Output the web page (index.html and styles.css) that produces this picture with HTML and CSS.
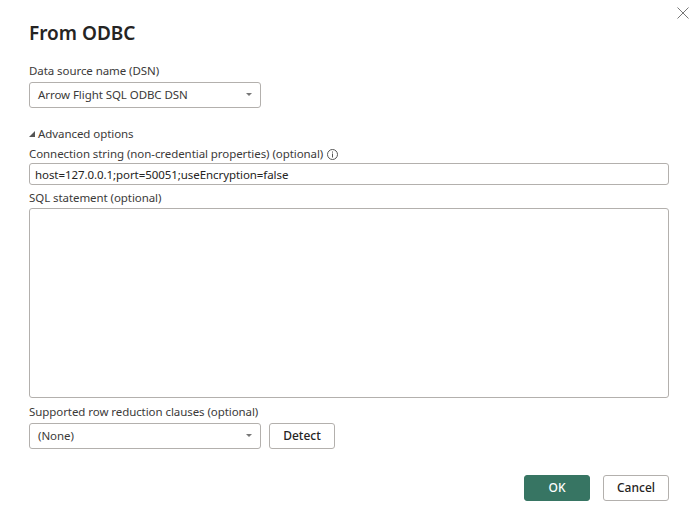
FILE: index.html
```html
<!DOCTYPE html>
<html lang="en">
<head>
    <meta charset="UTF-8">
    <title>From ODBC</title>
    <link rel="stylesheet" href="styles.css">
</head>
<body>
    <div class="dialog">
        <button type="button" class="close" aria-label="Close">
            <svg width="14" height="14" viewBox="0 0 14 14"><path d="M1.5 1.5L12.5 12.5M12.5 1.5L1.5 12.5" stroke="#777" stroke-width="1" fill="none"/></svg>
        </button>
        <h1>From ODBC</h1>

        <label class="label dsn-label">Data source name (DSN)</label>
        <div class="select">
            <span>Arrow Flight SQL ODBC DSN</span>
            <span class="caret"></span>
        </div>

        <div class="advanced">
            <svg width="6" height="6" viewBox="0 0 6 6"><path d="M6 0V6H0Z" fill="#555"/></svg>
            <span>Advanced options</span>
        </div>

        <label class="label conn-label">
            Connection string (non-credential properties) (optional)
            <svg class="info" width="11" height="11" viewBox="0 0 11 11">
                <circle cx="5.5" cy="5.5" r="5" stroke="#555" fill="none"/>
                <path d="M5.5 4.5V8.5M5.5 2.5V3.6" stroke="#555" fill="none"/>
            </svg>
        </label>
        <input class="text-input" type="text" value="host=127.0.0.1;port=50051;useEncryption=false">

        <label class="label sql-label">SQL statement (optional)</label>
        <textarea class="sql"></textarea>

        <label class="label row-label">Supported row reduction clauses (optional)</label>
        <div class="row">
            <div class="select">
                <span>(None)</span>
                <span class="caret"></span>
            </div>
            <button type="button" class="btn">Detect</button>
        </div>

        <div class="footer">
            <button type="button" class="btn primary">OK</button>
            <button type="button" class="btn">Cancel</button>
        </div>
    </div>
</body>
</html>
```
FILE: styles.css
```css
html, body {
    margin: 0;
    padding: 0;
    background-color: #fff;
    overflow: hidden;
}

body {
    font-family: "Noto Sans", "Open Sans", Arial, sans-serif;
    font-size: 11.5px;
    letter-spacing: -0.07px;
    color: #3b3a39;
}

.dialog {
    position: relative;
    width: 697px;
    height: 530px;
    box-sizing: border-box;
    padding: 20px 28px 0 29px;
}

.close {
    position: absolute;
    top: 6px;
    right: 7px;
    padding: 0;
    border: none;
    background: none;
    line-height: 0;
}

h1 {
    margin: 0;
    font-size: 19px;
    line-height: 27px;
    font-weight: 600;
    letter-spacing: 0;
    color: #252423;
}

.label {
    display: block;
    line-height: 16px;
    white-space: nowrap;
}

.dsn-label { margin-top: 16px; margin-bottom: 3px; }
.conn-label { margin-top: 4px; margin-bottom: 1px; }
.sql-label { margin-top: 5px; margin-bottom: 2px; }
.row-label { margin-top: 6px; margin-bottom: 3px; }

.select {
    display: flex;
    align-items: center;
    justify-content: space-between;
    width: 232px;
    height: 26px;
    box-sizing: border-box;
    padding: 0 8px 2px 8px;
    border: 1px solid #b3b0ad;
    border-radius: 3px;
    background-color: #fff;
}

.caret {
    width: 0;
    height: 0;
    border-left: 3px solid transparent;
    border-right: 3px solid transparent;
    border-top: 3px solid #777;
}

.advanced {
    display: flex;
    align-items: center;
    gap: 3px;
    margin-top: 18px;
    line-height: 16px;
}

.info {
    margin-left: 1px;
    vertical-align: -2px;
}

.text-input {
    display: block;
    width: 640px;
    height: 22px;
    box-sizing: border-box;
    padding: 0 5px;
    border: 1px solid #b3b0ad;
    border-radius: 3px;
    font-family: inherit;
    font-size: 11.5px;
    letter-spacing: -0.07px;
    color: #252423;
    outline: none;
}

.sql {
    display: block;
    width: 640px;
    height: 190px;
    box-sizing: border-box;
    border: 1px solid #b3b0ad;
    border-radius: 3px;
    resize: none;
    outline: none;
}

.row {
    display: flex;
    gap: 8px;
}

.btn {
    width: 66px;
    height: 26px;
    padding: 0 0 2px;
    border: 1px solid #b3b0ad;
    border-radius: 3px;
    background-color: #fff;
    font-family: inherit;
    font-size: 12px;
    font-weight: 500;
    color: #252423;
}

.footer {
    display: flex;
    justify-content: flex-end;
    gap: 13px;
    margin-top: 26px;
}

.primary {
    border-color: #377563;
    background-color: #377563;
    color: #fff;
}
```
